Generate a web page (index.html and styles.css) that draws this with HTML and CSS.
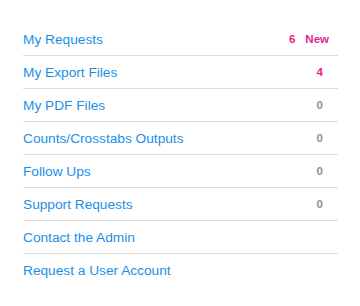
FILE: index.html
```html
<!DOCTYPE html>
<html>
<head>
<meta charset="utf-8">
<link rel="stylesheet" href="styles.css">
</head>
<body>
<ul class="menu">
  <li class="item item--new"><a class="label" href="#">My Requests</a><span class="meta"><span class="count count--hot">6</span><span class="new">New</span></span></li>
  <li class="item"><a class="label" href="#">My Export Files</a><span class="meta"><span class="count count--hot">4</span></span></li>
  <li class="item"><a class="label" href="#">My PDF Files</a><span class="meta"><span class="count">0</span></span></li>
  <li class="item"><a class="label" href="#">Counts/Crosstabs Outputs</a><span class="meta"><span class="count">0</span></span></li>
  <li class="item"><a class="label" href="#">Follow Ups</a><span class="meta"><span class="count">0</span></span></li>
  <li class="item"><a class="label" href="#">Support Requests</a><span class="meta"><span class="count">0</span></span></li>
  <li class="item"><a class="label" href="#">Contact the Admin</a></li>
  <li class="item item--last"><a class="label" href="#">Request a User Account</a></li>
</ul>
</body>
</html>
```
FILE: styles.css
```css
html, body {
  margin: 0;
  padding: 0;
  background: #ffffff;
}
body {
  font-family: "Liberation Sans", Arial, sans-serif;
}
.menu {
  list-style: none;
  margin: 0;
  padding: 23px 22px 0 23px;
  width: 315px;
}
.item {
  display: flex;
  align-items: center;
  justify-content: space-between;
  height: 32px;
  border-bottom: 1px solid #dedede;
  padding-right: 15px;
}
.item--new {
  padding-right: 9px;
}
.item--last {
  border-bottom: none;
}
.label {
  color: #1a8fe8;
  text-decoration: none;
  font-size: 13.7px;
}
.meta {
  display: flex;
  align-items: center;
}
.count {
  font-size: 11.5px;
  font-weight: bold;
  color: #8c9199;
}
.count--hot {
  color: #e8218c;
}
.new {
  margin-left: 10px;
  font-size: 11.5px;
  font-weight: bold;
  color: #e8218c;
}
```
